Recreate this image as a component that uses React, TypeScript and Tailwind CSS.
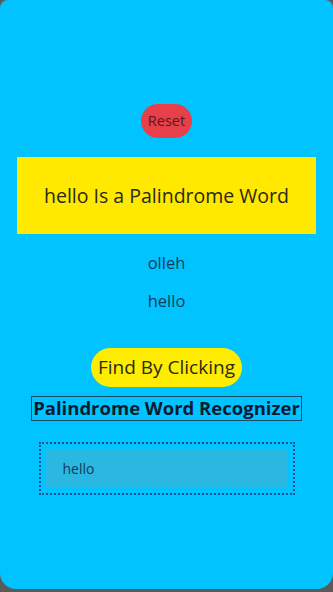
import React from "react";

export default function App() {
  return (
    <div className="w-[333px] h-[592px] bg-[#5a5a5a]" style={{ fontFamily: '"Open Sans", "Noto Sans", sans-serif' }}>
      <div className="h-[589px] bg-[#00c3ff] rounded-t-[8px] rounded-b-[16px] flex flex-col items-center">
        <button className="mt-[104px] h-[34px] px-[7px] rounded-full bg-[#e8404a] text-[#5e1616] text-[14.5px] leading-none">
          Reset
        </button>
        <div className="mt-[19px] w-[299px] h-[77px] bg-[#ffe900] flex items-center justify-center text-[19.5px] text-[#2a2a14]">
          hello Is a Palindrome Word
        </div>
        <div className="mt-[17px] h-[24px] flex items-center text-[16.5px] text-[#143c58]">olleh</div>
        <div className="mt-[14px] h-[24px] flex items-center text-[16.5px] text-[#143c58]">hello</div>
        <button className="mt-[35px] w-[151px] h-[39px] rounded-full bg-[#ffed00] text-[19px] text-[#2a2a14] leading-none flex items-center justify-center">
          Find By Clicking
        </button>
        <div className="mt-[9px] h-[25px] px-[1px] border border-[#1a4a6a] flex items-center justify-center text-[18.5px] font-bold text-[#0a1a30] leading-none whitespace-nowrap">
          Palindrome Word Recognizer
        </div>
        <div className="mt-[21px] w-[256px] h-[53px] border-2 border-dotted border-[#1e4f86] p-[5px]">
          <div className="w-full h-full bg-[#2ab8e2] flex items-center pl-[17px] text-[14px] text-[#143c58]">
            hello
          </div>
        </div>
      </div>
    </div>
  );
}
